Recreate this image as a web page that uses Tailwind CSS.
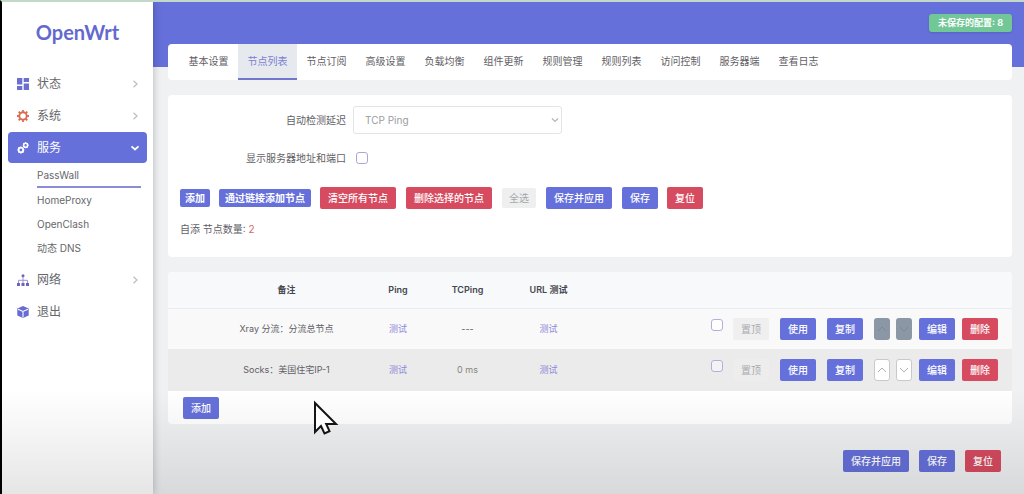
<!DOCTYPE html>
<html lang="zh-CN">
<head>
<meta charset="utf-8">
<title>OpenWrt - PassWall</title>
<script src="https://cdn.jsdelivr.net/npm/@tailwindcss/browser@4"></script>
</head>
<body class="relative flex min-h-screen border-t-2 border-l-2 border-t-[#c3d8c8] border-l-black bg-[#f0f1f3] font-['Inter','Noto_Sans_CJK_SC',sans-serif] text-[10px] leading-4 text-[#5f6066]">

<aside class="z-10 w-[151px] shrink-0 bg-white px-1.5 shadow-[0_0_8px_rgba(0,0,0,0.25)]">
  <a href="#" class="mt-4 block h-[50px] text-center font-['Lato',sans-serif] text-[20px] leading-7 font-bold text-[#6469cf]">OpenWrt</a>
  <nav class="text-[12px] text-[#66676b]">
    <a href="#" class="mb-px flex h-[31px] items-center pr-2 pl-[9px]">
      <svg class="mr-2 size-3" viewBox="0 0 12 12" fill="#6a6fd0"><path d="M0 0h5.3v6.6H0zM0 8h5.3v4H0zM6.7 0H12v4H6.700zM6.700 5.400H12V12H6.700z"/></svg>
      <span class="grow">状态</span>
      <svg class="size-2" viewBox="0 0 8 8" fill="none" stroke="#bdbdc0" stroke-width="1.200"><path d="M2.500.8 6 4 2.500 7.200"/></svg>
    </a>
    <a href="#" class="mb-px flex h-[31px] items-center pr-2 pl-[9px]">
      <svg class="mr-2 size-3" viewBox="0 0 12 12" fill="none" stroke="#d9694f"><circle cx="6" cy="6" r="3.700" stroke-width="1.900"/><path stroke-width="1.800" d="M6 0v1.800M6 10.200V12M0 6h1.800M10.200 6H12M1.700 1.700l1.300 1.300M9 9l1.300 1.300M10.300 1.700 9 3M3 9l-1.300 1.300"/></svg>
      <span class="grow">系统</span>
      <svg class="size-2" viewBox="0 0 8 8" fill="none" stroke="#bdbdc0" stroke-width="1.200"><path d="M2.500.8 6 4 2.500 7.200"/></svg>
    </a>
    <a href="#" class="mb-px flex h-[31px] items-center rounded bg-[#6570da] pr-[7px] pl-[9px] text-white">
      <svg class="mr-2 size-3" viewBox="0 0 12 12" fill="none" stroke="#fff"><circle cx="3.900" cy="8" r="2.300" stroke-width="1.800"/><path stroke-width="1.200" d="M3.900 4.600v1M3.900 10.400v1.200M.4 8h1.200M6.200 8h1.200M1.400 5.500l.9.9M5.500 9.600l.9.900M1.400 10.500l.9-.9"/><circle cx="8.600" cy="3.300" r="2" stroke-width="1.600"/><path stroke-width="1.100" d="M8.600.3v1M8.600 5.300v1M10.500 3.300h1.200M10 1.900l.8-.8M10 4.700l.8.800M6.400 1.100l.8.800"/></svg>
      <span class="grow">服务</span>
      <svg class="size-2.5" viewBox="0 0 10 10" fill="none" stroke="#fff" stroke-width="1.800"><path d="M1.500 3.300 5 6.500l3.500-3.200"/></svg>
    </a>
    <div class="mb-1 pr-1.5 pl-[29px] text-[10px]">
      <a href="#" class="flex h-6 items-center border-b-2 border-b-[#8a8dd6]">PassWall</a>
      <a href="#" class="flex h-6 items-center">HomeProxy</a>
      <a href="#" class="flex h-6 items-center">OpenClash</a>
      <a href="#" class="flex h-6 items-center">动态 DNS</a>
    </div>
    <a href="#" class="mb-px flex h-[31px] items-center pr-2 pl-[9px]">
      <svg class="mr-2 size-3" viewBox="0 0 12 12" fill="#6a63c0"><circle cx="6" cy="1.700" r="1.500"/><path d="M0 9h3v3H0zM4.500 9h3v3h-3zM9 9h3v3H9z"/><path fill="none" stroke="#8f8cce" stroke-width=".9" d="M6 3v6M1.500 9V6.300h9V9"/></svg>
      <span class="grow">网络</span>
      <svg class="size-2" viewBox="0 0 8 8" fill="none" stroke="#bdbdc0" stroke-width="1.200"><path d="M2.500.8 6 4 2.500 7.200"/></svg>
    </a>
    <a href="#" class="mb-px flex h-[31px] items-center pr-2 pl-[9px]">
      <svg class="mr-2 size-3" viewBox="0 0 12 12"><path fill="#666cd3" d="M6 0 11.700 2.500v7L6 12 .3 9.500v-7z"/><path fill="none" stroke="#fff" stroke-width="1.100" d="M1 3.200 6 5.400l5-2.200M6 5.400v6"/></svg>
      <span class="grow">退出</span>
    </a>
  </nav>
</aside>

<main class="min-w-0 grow">
  <header class="flex h-[65px] items-start justify-end bg-[#6570da] pt-3 pr-3">
    <button class="h-[18px] rounded-[3px] bg-[#72c796] px-[9px] text-[9px] leading-[18px] font-bold text-white shadow">未保存的配置: 8</button>
  </header>

  <div class="-mt-[23px] pr-3 pl-[15px]">
    <nav class="flex h-9 overflow-hidden rounded bg-white pl-[11px] text-center leading-[35px]">
      <a href="#" class="w-[59px]">基本设置</a>
      <a href="#" class="w-[59px] border-b-2 border-[#7175cc] bg-[#e6e9ed] text-[#7c7fd2]">节点列表</a>
      <a href="#" class="w-[59px]">节点订阅</a>
      <a href="#" class="w-[59px]">高级设置</a>
      <a href="#" class="w-[59px]">负载均衡</a>
      <a href="#" class="w-[59px]">组件更新</a>
      <a href="#" class="w-[59px]">规则管理</a>
      <a href="#" class="w-[59px]">规则列表</a>
      <a href="#" class="w-[59px]">访问控制</a>
      <a href="#" class="w-[59px]">服务器端</a>
      <a href="#" class="w-[59px]">查看日志</a>
    </nav>

    <section class="mt-[15px] rounded bg-white px-3 pt-[11px] pb-5">
      <div class="flex h-7 items-center">
        <label for="delay" class="w-[166px] text-right">自动检测延迟</label>
        <div class="relative ml-[7px] w-[209px]">
          <select id="delay" class="block h-7 w-full appearance-none rounded-[3px] border border-[#e3e4e8] bg-white px-[11px] text-[#9a9b9f]"><option>TCP Ping</option></select>
          <svg class="pointer-events-none absolute top-[10px] right-[3px] size-2" viewBox="0 0 8 8" fill="none" stroke="#b4b5b9" stroke-width="1.200"><path d="M1 2.500 4 5.500 7 2.500"/></svg>
        </div>
      </div>
      <div class="mt-2.5 flex h-7 items-center">
        <label for="showaddr" class="w-[166px] text-right">显示服务器地址和端口</label>
        <input id="showaddr" type="checkbox" class="ml-2.5 size-3 appearance-none rounded-[3px] border border-[#aaa7d6] bg-white">
      </div>
      <div class="mt-[15px] flex h-[22px] items-center text-white">
        <button class="h-[18px] rounded-xs bg-[#6570da] px-[5px] font-bold">添加</button>
        <button class="ml-[9px] h-[18px] rounded-xs bg-[#6570da] px-1.5 font-bold">通过链接添加节点</button>
        <button class="ml-[9px] h-[22px] rounded-xs bg-[#d64b60] px-2 font-medium">清空所有节点</button>
        <button class="ml-2.5 h-[22px] rounded-xs bg-[#d64b60] px-2 font-medium">删除选择的节点</button>
        <button class="ml-2.5 h-5 rounded-xs bg-[#efeff0] px-[7px] text-[#a5a7ac]">全选</button>
        <button class="ml-2.5 h-[22px] rounded-xs bg-[#6570da] px-2 font-medium">保存并应用</button>
        <button class="ml-2.5 h-[22px] rounded-xs bg-[#6570da] px-2 font-medium">保存</button>
        <button class="ml-[9px] h-[22px] rounded-xs bg-[#d64b60] px-2 font-medium">复位</button>
      </div>
      <p class="mt-3">自添 节点数量: <span class="text-[#d56868]">2</span></p>
    </section>

    <section class="mt-[15px] overflow-hidden rounded bg-white">
      <table class="w-full table-fixed border-collapse text-center text-[9px]">
        <colgroup>
          <col class="w-[40px]"><col class="w-[157px]"><col class="w-[66px]"><col class="w-[73px]"><col class="w-[89px]"><col>
        </colgroup>
        <thead>
          <tr class="h-9 border-b border-[#ebecef] bg-[#f8f9fb] text-[#45464f]">
            <td></td><th class="font-bold">备注</th><th class="font-semibold">Ping</th><th class="font-semibold">TCPing</th><th class="font-semibold">URL 测试</th><td></td>
          </tr>
        </thead>
        <tbody>
          <tr class="h-[41px] bg-[#f9f9f9]">
            <td></td><td>Xray 分流：分流总节点</td>
            <td><a href="#" class="text-[#8d88d8]">测试</a></td><td>---</td>
            <td><a href="#" class="text-[#8d88d8]">测试</a></td>
            <td class="pr-3.5">
              <div class="flex items-center justify-end text-[10px] font-medium text-white">
                <input type="checkbox" aria-label="选择 Xray 分流" class="mr-2.5 mb-2 size-3 appearance-none rounded-[3px] border border-[#b3aedb] bg-white">
                <button class="mr-[11px] h-[22px] rounded-xs bg-[#efeff0] px-2 font-normal text-[#a9abaf]">置顶</button>
                <button class="mr-[11px] h-[22px] rounded-xs bg-[#6570da] px-2">使用</button>
                <button class="mr-[11px] h-[22px] rounded-xs bg-[#6570da] px-2">复制</button>
                <button aria-label="上移" class="mr-[6px] flex h-[22px] w-4 items-center justify-center rounded-[3px] bg-[#8c97a5]"><svg class="size-2.5" viewBox="0 0 10 10" fill="none" stroke="#7388a6"><path d="M1 7 5 3l4 4"/></svg></button>
                <button aria-label="下移" class="mr-[7px] flex h-[22px] w-4 items-center justify-center rounded-[3px] bg-[#8c97a5]"><svg class="size-2.5" viewBox="0 0 10 10" fill="none" stroke="#7388a6"><path d="M1 3l4 4 4-4"/></svg></button>
                <button class="mr-[7px] h-[22px] rounded-xs bg-[#6570da] px-2">编辑</button>
                <button class="h-[22px] rounded-xs bg-[#d64b60] px-2">删除</button>
              </div>
            </td>
          </tr>
          <tr class="h-[42px] bg-[#ebebeb]">
            <td></td><td>Socks：美国住宅IP-1</td>
            <td><a href="#" class="text-[#8d88d8]">测试</a></td><td class="text-[#858680]">0 ms</td>
            <td><a href="#" class="text-[#8d88d8]">测试</a></td>
            <td class="pr-3.5">
              <div class="flex items-center justify-end text-[10px] font-medium text-white">
                <input type="checkbox" aria-label="选择 Socks" class="mr-2.5 mb-2 size-3 appearance-none rounded-[3px] border border-[#b3aedb] bg-[#f3f3f3]">
                <button class="mr-[11px] h-[22px] rounded-xs bg-[#ededed] px-2 font-normal text-[#a9abaf]">置顶</button>
                <button class="mr-[11px] h-[22px] rounded-xs bg-[#6570da] px-2">使用</button>
                <button class="mr-[11px] h-[22px] rounded-xs bg-[#6570da] px-2">复制</button>
                <button aria-label="上移" class="mr-[6px] flex h-[22px] w-4 items-center justify-center rounded-[3px] border border-[#c9c9cc] bg-white"><svg class="size-2.5 shrink-0" viewBox="0 0 10 10" fill="none" stroke="#b0b1b5"><path d="M1 7 5 3l4 4"/></svg></button>
                <button aria-label="下移" class="mr-[7px] flex h-[22px] w-4 items-center justify-center rounded-[3px] border border-[#c9c9cc] bg-white"><svg class="size-2.5 shrink-0" viewBox="0 0 10 10" fill="none" stroke="#b0b1b5"><path d="M1 3l4 4 4-4"/></svg></button>
                <button class="mr-[7px] h-[22px] rounded-xs bg-[#6570da] px-2">编辑</button>
                <button class="h-[22px] rounded-xs bg-[#d64b60] px-2">删除</button>
              </div>
            </td>
          </tr>
        </tbody>
      </table>
      <div class="flex h-[33px] items-center pl-[15px]">
        <button class="h-[22px] rounded-xs bg-[#6570da] px-2 font-medium text-white">添加</button>
      </div>
    </section>

    <div class="mt-[26px] flex justify-end gap-2.5 pr-[11px] font-medium text-white">
      <button class="h-[22px] rounded-xs bg-[#6570da] px-2">保存并应用</button>
      <button class="h-[22px] rounded-xs bg-[#6570da] px-2">保存</button>
      <button class="h-[22px] rounded-xs bg-[#d64b60] px-2">复位</button>
    </div>
  </div>
</main>

<div class="pointer-events-none absolute inset-x-0 bottom-0 z-20 h-[104px] bg-linear-to-b from-black/0 to-black/10"></div>

<svg class="pointer-events-none absolute top-[398px] left-[311px] z-30 h-9 w-[26px]" viewBox="0 0 26 36" fill="#fff" stroke="#151515" stroke-width="2" stroke-linejoin="miter"><path d="M2 3v29l6-6 3.500 7.500 5-2.300L13.200 24H23z"/></svg>
</body>
</html>
